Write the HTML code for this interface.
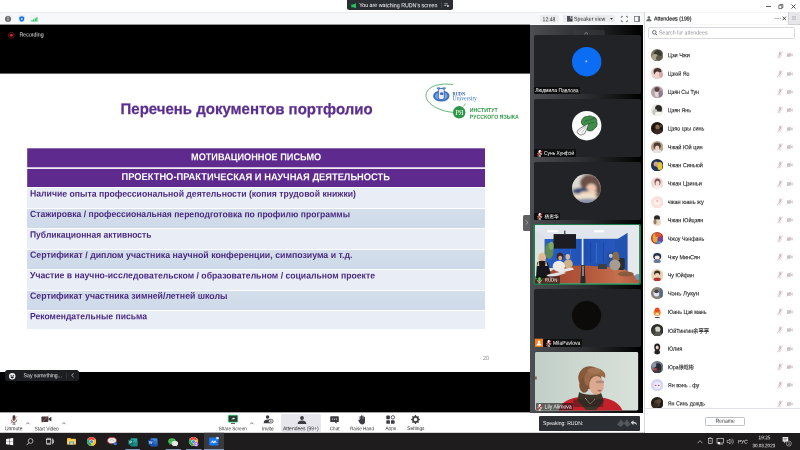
<!DOCTYPE html>
<html lang="ru"><head><meta charset="utf-8"><title>Zoom Webinar</title>
<style>
html,body{margin:0;padding:0;}
body{width:800px;height:450px;overflow:hidden;background:#fff;position:relative;font-family:'Liberation Sans','Noto Sans CJK SC',sans-serif;}
.a{position:absolute;}
.t{position:absolute;white-space:nowrap;transform-origin:0 50%;}
#txt{position:absolute;left:0;top:0;width:800px;height:450px;will-change:transform;}
svg{position:absolute;overflow:visible;}

</style></head><body>
<svg style="left:0px;top:0px" width="800" height="12"><rect x="0.00" y="0.00" width="800.00" height="12.00" fill="#fff"/></svg><div class="a" style="left:0px;top:12px;width:644.00px;height:12.60px;background:#f7f8fa;border-top:0.6px solid #ececf0;box-sizing:border-box;"></div><svg style="left:0px;top:24px" width="530" height="389"><rect x="0.00" y="0.60" width="530.00" height="388.00" fill="#000"/></svg><svg style="left:0px;top:73px" width="530" height="299"><rect x="0.00" y="0.60" width="530.00" height="298.40" fill="#fff"/></svg><svg style="left:0px;top:412px" width="644" height="21"><rect x="0.00" y="0.60" width="644.00" height="20.20" fill="#fff"/></svg><div class="a" style="left:644px;top:12px;width:156.00px;height:420.80px;background:#fff;border-left:0.7px solid #d8d8dc;box-sizing:border-box;"></div><svg style="left:0px;top:432px" width="800" height="18"><rect x="0.00" y="0.80" width="800.00" height="17.20" fill="#1e1c1c"/></svg><div class="a" style="left:347.3px;top:0px;width:105.30px;height:9.80px;background:#2a2d31;border-radius:0 0 2.5px 2.5px;"></div><svg style="left:351px;top:2.6px" width="6" height="6" viewBox="0 0 6 6"><path d="M0.3 1.5h2L5 0.3v5L2.3 4.2h-2z" fill="#23c55e"/></svg><svg style="left:441px;top:2px" width="1" height="6"><rect x="0.40" y="0.00" width="0.50" height="6.00" fill="#55585d"/></svg><svg style="left:444.3px;top:3.2px" width="5" height="5" viewBox="0 0 5 5"><path d="M0.3 0.8h3.6M0.3 2.5h2M3 2.6l0.9 1.4l0.9-1.4z" stroke="#cfd2d6" stroke-width="0.7" fill="#cfd2d6"/></svg><svg style="left:760px;top:0" width="40" height="12" viewBox="760 0 40 12"><path d="M766 6.5h5" stroke="#333" stroke-width="0.8"/><path d="M778.8 5.3h3v3.3h-3z M779.9 5.3v-0.9h3v3.3h-1.1" stroke="#333" stroke-width="0.65" fill="none"/><path d="M791.5 4.5l4 4M795.5 4.5l-4 4" stroke="#222" stroke-width="0.8"/></svg><div class="a" style="left:4.6px;top:15px;width:7.20px;height:7.00px;background:#eeeff2;border-radius:1px;"></div><svg style="left:5.2px;top:15.5px" width="6" height="6" viewBox="0 0 6 6"><circle cx="3" cy="3" r="3" fill="#6b6c70"/><rect x="2.6" y="2.5" width="0.8" height="2.1" fill="#fff"/><circle cx="3" cy="1.5" r="0.5" fill="#fff"/></svg><div class="a" style="left:17.6px;top:15px;width:7.60px;height:7.00px;background:#eeeff2;border-radius:1px;"></div><svg style="left:18.5px;top:16.1px" width="5.5" height="5.9" viewBox="0 0 6.4 7.2"><path d="M3.2 0.2L6.2 1.2V3.6C6.2 5.4 4.8 6.6 3.2 7C1.6 6.6 0.2 5.4 0.2 3.6V1.2z" fill="#0e72ed"/><rect x="2.2" y="2.6" width="2" height="2" rx="0.5" fill="#fff"/></svg><div class="a" style="left:30px;top:15px;width:7.60px;height:7.00px;background:#f1f2f4;border-radius:1px;"></div><svg style="left:30.6px;top:16.6px" width="7" height="4.8" viewBox="0 0 7 5"><rect x="0.3" y="3.2" width="1.2" height="1.6" fill="#23c55e"/><rect x="2" y="2.4" width="1.2" height="2.4" fill="#23c55e"/><rect x="3.7" y="1.3" width="1.2" height="3.5" fill="#23c55e"/><rect x="5.4" y="0.2" width="1.2" height="4.6" fill="#23c55e"/></svg><div class="a" style="left:540px;top:14.6px;width:19.00px;height:7.80px;background:#ebecef;border-radius:1px;"></div><div class="a" style="left:563.3px;top:14.6px;width:52.00px;height:7.80px;background:#ebecef;border-radius:1px;"></div><svg style="left:567.2px;top:15.8px" width="5.6" height="5.6" viewBox="0 0 5.6 5.6"><rect x="0" y="0" width="5.6" height="5.6" fill="#4e5055"/><rect x="3.2" y="0" width="2.4" height="2.5" fill="#ebecef"/><rect x="3.6" y="0.2" width="1.8" height="1.9" fill="#6a6c72"/></svg><svg style="left:609.6px;top:17.6px" width="3" height="2" viewBox="0 0 3 2"><path d="M0 0h3L1.5 1.8z" fill="#333"/></svg><svg style="left:620.9px;top:15.9px" width="6.8" height="6" viewBox="0 0 6.8 6"><path d="M0.4 1.9V0.4H1.9M4.9 0.4H6.4V1.9M6.4 4.1V5.6H4.9M1.9 5.6H0.4V4.1" stroke="#5a5c61" stroke-width="0.75" fill="none"/></svg><svg style="left:634.1px;top:15.9px" width="5.8" height="6" viewBox="0 0 5.8 6"><rect x="0.35" y="0.35" width="5.1" height="5.3" stroke="#63656b" stroke-width="0.7" fill="none"/><rect x="4.3" y="0.35" width="1.3" height="5.3" fill="#63656b"/></svg><svg style="left:8.4px;top:31.5px" width="6.6" height="6.6" viewBox="0 0 6.6 6.6"><circle cx="3.3" cy="3.3" r="2.9" fill="none" stroke="#8d1c1c" stroke-width="0.7"/><circle cx="3.3" cy="3.3" r="1.5" fill="#cf2a2a"/></svg><svg style="left:27px;top:148px" width="458" height="20"><rect x="0.20" y="0.30" width="457.80" height="19.00" fill="#5e2a8e"/></svg><svg style="left:27px;top:168px" width="458" height="20"><rect x="0.20" y="0.90" width="457.80" height="18.50" fill="#5e2a8e"/></svg><div class="a" style="left:27.2px;top:187.4px;width:457.80px;height:20.80px;background:#e9edf6;border-top:0.6px solid #fff;box-sizing:border-box;"></div><div class="a" style="left:27.2px;top:208.2px;width:457.80px;height:20.20px;background:linear-gradient(#d4deeb,#cedaea);border-top:0.6px solid #fff;box-sizing:border-box;"></div><div class="a" style="left:27.2px;top:228.4px;width:457.80px;height:20.20px;background:#e9edf6;border-top:0.6px solid #fff;box-sizing:border-box;"></div><div class="a" style="left:27.2px;top:248.6px;width:457.80px;height:20.20px;background:linear-gradient(#d4deeb,#cedaea);border-top:0.6px solid #fff;box-sizing:border-box;"></div><div class="a" style="left:27.2px;top:268.8px;width:457.80px;height:20.80px;background:#e9edf6;border-top:0.6px solid #fff;box-sizing:border-box;"></div><div class="a" style="left:27.2px;top:289.6px;width:457.80px;height:20.20px;background:linear-gradient(#d4deeb,#cedaea);border-top:0.6px solid #fff;box-sizing:border-box;"></div><div class="a" style="left:27.2px;top:309.8px;width:457.80px;height:19.60px;background:#e9edf6;border-top:0.6px solid #fff;box-sizing:border-box;"></div><svg style="left:420px;top:80px" width="110" height="50" viewBox="420 80 110 50">
<path d="M453 84.6C440 82.5 426 86.5 426 95.5C426 104 440 111.5 453 112.3" fill="none" stroke="#3aa152" stroke-width="0.8"/>
<path d="M463.5 106.5l2-3" stroke="#3aa152" stroke-width="0.7"/>
<circle cx="459.2" cy="112.3" r="6.2" fill="#2e9648"/>
<ellipse cx="441.3" cy="96" rx="8.2" ry="5.6" fill="#3a6fc4"/>
<ellipse cx="441.3" cy="96" rx="6.2" ry="4" fill="#7fa3dc"/>
<rect x="438.3" y="88.5" width="6" height="11" rx="2" fill="#e8eef8" stroke="#2f62b8" stroke-width="0.9"/>
<path d="M436.8 88.2h3.4M442.4 88.2h3.4" stroke="#2f62b8" stroke-width="1.2"/>
<path d="M440.2 92.5h3v2.4h-3z" fill="#2f62b8"/>
</svg><div class="a" style="left:523px;top:214.6px;width:7.50px;height:16.00px;background:#5f6063;border-radius:1.5px 0 0 1.5px;"></div><svg style="left:525.3px;top:220.2px" width="3.4" height="5" viewBox="0 0 3.4 5"><path d="M0.5 0.4L2.9 2.5L0.5 4.6" stroke="#c8c8c8" stroke-width="0.6" fill="none"/></svg><div class="a" style="left:5px;top:369.6px;width:73.50px;height:11.40px;background:#1d1e21;border-radius:2.5px;"></div><svg style="left:8.6px;top:372.6px" width="6.4" height="6.4" viewBox="0 0 6.4 6.4"><circle cx="3.2" cy="3.2" r="3.2" fill="#f2f2f2"/><circle cx="2.1" cy="2.4" r="0.55" fill="#1d1e21"/><circle cx="4.3" cy="2.4" r="0.55" fill="#1d1e21"/><path d="M1.4 3.6h3.6a1.8 1.8 0 0 1-3.6 0z" fill="#1d1e21"/></svg><svg style="left:66px;top:372px" width="1" height="7"><rect x="0.20" y="0.30" width="0.50" height="6.50" fill="#4a4b4f"/></svg><svg style="left:71.2px;top:373.4px" width="3" height="4.6" viewBox="0 0 3 4.6"><path d="M2.6 0.4L0.6 2.3L2.6 4.2" stroke="#e0e0e0" stroke-width="0.7" fill="none"/></svg><div class="a" style="left:530px;top:24.6px;width:113.30px;height:388.40px;background:linear-gradient(90deg,#4d4f54 0%,#46484c 8%,#2c2d30 50%,#0a0a0a 88%,#000 100%);"></div><div class="a" style="left:573px;top:29.6px;width:32.00px;height:5.40px;background:rgba(60,61,64,0.55);border-radius:2px 2px 0 0;"></div><svg style="left:584.2px;top:31.5px" width="4.4" height="2.6" viewBox="0 0 4.4 2.6"><path d="M0.3 2.3L2.2 0.5L4.1 2.3" stroke="#c4c4c4" stroke-width="0.6" fill="none"/></svg><div class="a" style="left:534px;top:35.3px;width:107.00px;height:59.00px;background:#222326;border-radius:2px;"></div><div class="a" style="left:534px;top:98.9px;width:107.00px;height:58.00px;background:#222326;border-radius:2px;"></div><div class="a" style="left:534px;top:161.8px;width:107.00px;height:58.60px;background:#222326;border-radius:2px;"></div><div class="a" style="left:533.1px;top:223.8px;width:107.90px;height:61.30px;background:#1f7d4c;border-radius:2px;"></div><div class="a" style="left:534px;top:289.1px;width:107.00px;height:57.80px;background:#222326;border-radius:2px;"></div><svg style="left:571.7px;top:46.8px" width="29.4" height="29.4"><circle cx="14.7" cy="14.7" r="14.7" fill="#0b6cf4"/></svg><div class="a" style="left:534px;top:86.9px;width:46.20px;height:7.40px;background:rgba(8,8,9,0.82);border-radius:1px;"></div><svg style="left:571.7px;top:110.6px" width="29.4" height="29.4" viewBox="0 0 29.2 29.2"><circle cx="14.6" cy="14.6" r="14.6" fill="#fbfbfb"/>
<path d="M9.6 12.6C8.6 8.6 11.6 5.2 15.4 5.4C17 4.6 19.4 4.8 20.6 5.8C23.4 6 25 8.4 24.6 10.6C25.6 13 24.6 16 22.4 17.4C21 19.6 18 20.4 15.6 19.4C14.8 17.6 14.6 16 15 14.6C13 15 10.8 14.4 9.6 12.6z" fill="#3f8f4a" stroke="#1c3f22" stroke-width="0.7"/>
<path d="M12 11.4C13.6 9.4 16 8.6 18 9M15.4 14.4C17 12 19.6 11 22 11.4M18 9C19.4 7.6 21.4 7.2 23 8" stroke="#1c3f22" stroke-width="0.5" fill="none"/>
<path d="M16.4 12.4C13 14.4 8.4 16.6 6 19C4.6 20.6 5.2 22.6 6.8 22.6C7.4 24 9.4 24.2 10.4 23.2C12 23.4 13 22.4 13 21.4C14.6 18.6 16 15.4 16.4 12.4z" fill="#fdfdfd" stroke="#2a2a2a" stroke-width="0.6"/>
<path d="M7.4 20.6C9.4 18.4 12 16 14.6 14.6M9.4 22C11 20 12.6 18 14.2 16" stroke="#555" stroke-width="0.4" fill="none"/></svg><div class="a" style="left:534px;top:148.9px;width:41.60px;height:8.00px;background:rgba(8,8,9,0.82);border-radius:1px;"></div><svg style="left:536.7px;top:149.7px" width="5.6" height="6.6" viewBox="0 0 5.4 6.4"><rect x="1.5" y="0.1" width="2.4" height="3.9" rx="1.2" fill="#fafafa"/><path d="M0.7 3a2 2 0 0 0 4 0M2.7 5v0.9M1.5 6.1h2.4" stroke="#f4f4f4" stroke-width="0.7" fill="none"/><path d="M0.5 5.7L5 0.7" stroke="#d9342e" stroke-width="1.05"/></svg><svg style="left:571.7px;top:173.7px" width="28.8" height="28.8" viewBox="0 0 29.2 29.2"><defs><clipPath id="c3"><circle cx="14.6" cy="14.6" r="14.6"/></clipPath><filter id="b3"><feGaussianBlur stdDeviation="1"/></filter></defs>
<g clip-path="url(#c3)"><rect width="29.2" height="29.2" fill="#b9b4ac"/><g filter="url(#b3)">
<ellipse cx="6" cy="8" rx="8" ry="8" fill="#dcdad2"/>
<ellipse cx="18" cy="9" rx="10" ry="8" fill="#6a5048"/>
<ellipse cx="26" cy="16" rx="4" ry="7" fill="#5a4840"/>
<ellipse cx="19.6" cy="14.6" rx="5.2" ry="4.6" fill="#f0c8b0"/>
<ellipse cx="9" cy="17" rx="8" ry="3" fill="#3a4876"/>
<ellipse cx="17" cy="19.4" rx="9" ry="2" fill="#f2d4bc"/>
<ellipse cx="13" cy="23" rx="12" ry="2.6" fill="#efe2cc"/>
<ellipse cx="16" cy="27.5" rx="12" ry="2.6" fill="#8a94b0"/>
</g></g></svg><div class="a" style="left:534px;top:212.5px;width:25.90px;height:7.90px;background:rgba(8,8,9,0.82);border-radius:1px;"></div><svg style="left:536.7px;top:213.2px" width="5.6" height="6.6" viewBox="0 0 5.4 6.4"><rect x="1.5" y="0.1" width="2.4" height="3.9" rx="1.2" fill="#fafafa"/><path d="M0.7 3a2 2 0 0 0 4 0M2.7 5v0.9M1.5 6.1h2.4" stroke="#f4f4f4" stroke-width="0.7" fill="none"/><path d="M0.5 5.7L5 0.7" stroke="#d9342e" stroke-width="1.05"/></svg><svg style="left:571.7px;top:300.5px" width="29.2" height="29.2"><circle cx="14.6" cy="14.6" r="14.6" fill="#0d0b0a"/></svg><svg style="left:534px;top:338px" width="10" height="9"><rect x="0.70" y="0.70" width="8.40" height="8.20" fill="#f5821f"/></svg><svg style="left:535.9px;top:339.8px" width="6" height="6" viewBox="0 0 6 6"><circle cx="3" cy="1.8" r="1.3" fill="#fff"/><path d="M0.5 5.4C0.6 3.8 1.8 3.3 3 3.3C4.2 3.3 5.4 3.8 5.5 5.4z" fill="#fff"/></svg><div class="a" style="left:543.1px;top:338.7px;width:38.70px;height:8.20px;background:rgba(8,8,9,0.82);border-radius:1px;"></div><svg style="left:545.6px;top:339.6px" width="5.6" height="6.6" viewBox="0 0 5.4 6.4"><rect x="1.5" y="0.1" width="2.4" height="3.9" rx="1.2" fill="#fafafa"/><path d="M0.7 3a2 2 0 0 0 4 0M2.7 5v0.9M1.5 6.1h2.4" stroke="#f4f4f4" stroke-width="0.7" fill="none"/><path d="M0.5 5.7L5 0.7" stroke="#d9342e" stroke-width="1.05"/></svg><svg style="left:534.8px;top:225.4px" width="104.1" height="58.2" viewBox="534.6 225.4 104.8 57.7" preserveAspectRatio="none">
<defs><clipPath id="c4"><rect x="534.6" y="225.4" width="104.8" height="57.7" rx="1"/></clipPath><filter id="b4" x="-5%" y="-5%" width="110%" height="110%"><feGaussianBlur stdDeviation="0.65"/></filter>
<linearGradient id="tab" x1="0" x2="1"><stop offset="0" stop-color="#9c4630"/><stop offset="0.5" stop-color="#b4563a"/><stop offset="0.8" stop-color="#c4704e"/><stop offset="1" stop-color="#b05a40"/></linearGradient><linearGradient id="cur" x1="0" x2="1"><stop offset="0" stop-color="#2a5fc4"/><stop offset="0.5" stop-color="#1f50b4"/><stop offset="1" stop-color="#2a5cc0"/></linearGradient></defs>
<g clip-path="url(#c4)"><rect x="534" y="225" width="106" height="59" fill="#dde3ea"/><g filter="url(#b4)">
<polygon points="534,225 640,225 640,229 627,238 545,237 534,231" fill="#e0e6ec"/>
<rect x="547" y="230.6" width="11" height="2" fill="#fff"/><rect x="594" y="230.6" width="10" height="2" fill="#fff"/>
<polygon points="544,239.4 627,239 627,268 544,268" fill="url(#cur)"/>
<polygon points="615,241 628,233 628,272 615,268" fill="#2452b0"/>
<rect x="581.6" y="238" width="1.8" height="28" fill="#dfe6ee"/>
<rect x="596" y="243" width="1" height="20" fill="#4a78d0" opacity="0.7"/><rect x="603" y="243" width="1" height="20" fill="#183f98" opacity="0.7"/><rect x="590" y="243" width="1" height="20" fill="#183f98" opacity="0.6"/><rect x="570" y="248" width="1" height="16" fill="#4a78d0" opacity="0.6"/>
<polygon points="534,231 544,236 544,270 534,272" fill="#dde2e6"/>
<polygon points="628,232 640,227 640,276 628,272" fill="#e6e9ec"/>
<rect x="553.3" y="234.4" width="22.6" height="14.4" fill="#1b1c20"/><rect x="564" y="231" width="1.2" height="4" fill="#333"/>
<ellipse cx="549" cy="251" rx="4.2" ry="8" fill="#5f8a52"/><ellipse cx="551" cy="246" rx="2.4" ry="4" fill="#7fa868"/>
<rect x="607" y="252" width="7" height="12" fill="#2a4d9a"/><circle cx="611" cy="256" r="2" fill="#b8c4e0"/>
<polygon points="534,283.5 640,283.5 640,279 623,268 584,265.5 560,266 541,276 534,280" fill="url(#tab)"/>


<polygon points="581.2,265 584.6,265 585.6,284 580.2,284" fill="#2b2c2e"/>
<rect x="582" y="266" width="1.8" height="10" fill="#8b8f92"/>
<rect x="598" y="264" width="9" height="5" fill="#3a3f4a"/>
<rect x="618" y="258" width="7" height="12" rx="2" fill="#2a2d33"/>
<ellipse cx="626" cy="274" rx="8" ry="2.4" fill="#8a5a3c"/>
<ellipse cx="639" cy="277" rx="4" ry="3" fill="#7f8fa8"/>
<g transform="translate(0,1)"><!-- woman right -->
<ellipse cx="615.6" cy="254.6" rx="2.6" ry="3.2" fill="#c89a7c"/><path d="M613 254c0-4 6-4 6 0l0.8 5h-7.4z" fill="#8a6a48"/>
<ellipse cx="615" cy="264" rx="5.6" ry="5.4" fill="#a89c90"/>
<!-- man 3 -->
<ellipse cx="567.6" cy="256" rx="2.3" ry="2.8" fill="#d8b89c"/><ellipse cx="568" cy="263" rx="4.6" ry="4.4" fill="#cbb088"/>
<!-- woman 2 -->
<ellipse cx="559.8" cy="255.6" rx="3.4" ry="3.6" fill="#3a2620"/><ellipse cx="560" cy="257.2" rx="2" ry="2.4" fill="#d6a88c"/>
<ellipse cx="558.6" cy="265.2" rx="6.2" ry="5.4" fill="#eeeae6"/>
<polygon points="556,269 572,266.5 574,268.5 560,272" fill="#e8e8ea"/>
<!-- woman 1 -->
<ellipse cx="541.8" cy="256.6" rx="4" ry="4.6" fill="#dcc088"/><ellipse cx="542.2" cy="257.4" rx="2.2" ry="2.8" fill="#e0b498"/>
<path d="M536.6 262c1-3 9-3 11 0l2.6 10l-5 5h-9.6z" fill="#17171a"/><path d="M538.2 259l-1.6 6h2.4zM545.4 259l1.8 6h-2.4z" fill="#dcc088"/>
<polygon points="546,274 562,270.5 566,272 550,277" fill="#dfe2e6"/>
</g></g></g></svg><div class="a" style="left:535px;top:276.2px;width:24.80px;height:7.40px;background:rgba(20,20,20,0.55);border-radius:1px;"></div><svg style="left:536.9px;top:276.5px" width="5" height="6.4" viewBox="0 0 5 6.4"><rect x="1.3" y="0.2" width="2.4" height="4" rx="1.1" fill="#3fe04f"/><path d="M0.5 3a2 2 0 0 0 4 0M2.5 5v1M1.4 6.1h2.2" stroke="#e8f8ea" stroke-width="0.6" fill="none"/></svg><svg style="left:534.9px;top:351.8px" width="103.2" height="58.4" viewBox="534.4 351.4 104 58.6" preserveAspectRatio="none">
<defs><clipPath id="c6"><rect x="534.4" y="351.4" width="104" height="58.6" rx="1.5"/></clipPath><filter id="b6" x="-5%" y="-5%" width="110%" height="110%"><feGaussianBlur stdDeviation="0.7"/></filter>
<linearGradient id="wall" x1="0" x2="1"><stop offset="0" stop-color="#c1cec7"/><stop offset="0.4" stop-color="#cbd7cf"/><stop offset="1" stop-color="#d8e1da"/></linearGradient></defs>
<g clip-path="url(#c6)"><rect x="534" y="351" width="105" height="60" fill="url(#wall)"/><g filter="url(#b6)">
<path d="M558 411c2-9 10-13.5 22-14.5l20 0.5c12 1 20 6 23 14z" fill="#c3202c"/>
<g transform="translate(0,-1.4)"><path d="M579 393c4 3 14 4 22 1l3 8l-8 9h-10l-9-10z" fill="#3d342a"/>
<path d="M585 399l5 6l5-5" stroke="#b8a890" stroke-width="1" fill="none"/>
<ellipse cx="589.6" cy="378.6" rx="11.6" ry="11.4" fill="#875a3e"/>
<ellipse cx="584" cy="386" rx="5" ry="7.6" fill="#7d5238"/>
<ellipse cx="596.4" cy="386.4" rx="7.4" ry="9.4" fill="#dba98f"/>
<path d="M584 380c1-9 10-13 18-9c3 2 4 5 3 8c-5-4-11-4-15-1c-1 3-1 6-2 9c-3-1-4-4-4-7z" fill="#9a6a4a"/>
<ellipse cx="594" cy="371.4" rx="7" ry="3" fill="#a87856" opacity="0.8"/>
<ellipse cx="599.8" cy="382.8" rx="4.4" ry="1.3" fill="#a58374" opacity="0.8"/>
<ellipse cx="599.4" cy="391.6" rx="2" ry="0.8" fill="#b0625a"/>
</g>
<rect x="534.4" y="376" width="1.8" height="3" fill="#7a4a3a" opacity="0.8"/>
</g>
<rect x="573" y="399" width="30" height="7.6" fill="#241a18" opacity="0.45"/>
</g></svg><div class="a" style="left:535.8px;top:403.4px;width:37.20px;height:6.60px;background:rgba(20,20,20,0.6);border-radius:1px;"></div><svg style="left:537.2px;top:403.6px" width="5.6" height="6.6" viewBox="0 0 5.4 6.4"><rect x="1.5" y="0.1" width="2.4" height="3.9" rx="1.2" fill="#fafafa"/><path d="M0.7 3a2 2 0 0 0 4 0M2.7 5v0.9M1.5 6.1h2.4" stroke="#f4f4f4" stroke-width="0.7" fill="none"/><path d="M0.5 5.7L5 0.7" stroke="#d9342e" stroke-width="1.05"/></svg><div class="a" style="left:538.8px;top:416px;width:101.20px;height:14.60px;background:#2b2e33;border-radius:1px;"></div><svg style="left:616px;top:418.4px" width="22" height="10" viewBox="0 0 22 10"><path d="M1 6.5L5 1.5L8 5L11 1.2L14.5 6.5L11 9L8 5.6L5 9z" fill="#54585e"/><path d="M17.4 2.2v1.6c2 0 3.6 1 3.8 3.8c-0.8-1.4-2-2-3.8-2v1.6L14.6 4.6z" fill="#c9ccd0"/></svg><svg style="left:645.9px;top:15.5px" width="5.8" height="5.4" viewBox="0 0 5.8 5.4"><circle cx="2.9" cy="1.5" r="1.35" fill="#66686e"/><path d="M0.2 5.2C0.3 3.7 1.4 3.1 2.9 3.1C4.4 3.1 5.5 3.7 5.6 5.2z" fill="#66686e"/></svg><svg style="left:775px;top:16px" width="12" height="5" viewBox="775 16 12 5"><path d="M775.2 18.4h1.3M777.4 18.4h1.3M779.6 18.4h1.3" stroke="#444" stroke-width="0.6"/><path d="M782.6 16.6l3.4 3.6M786 16.6l-3.4 3.6" stroke="#222" stroke-width="0.8"/></svg><div class="a" style="left:788.4px;top:12.4px;width:11.60px;height:12.20px;background:#e7e7eb;border-left:0.5px solid #d0d0d6;border-bottom:0.5px solid #d0d0d6;box-sizing:border-box;"></div><svg style="left:792px;top:16.4px" width="4" height="4" viewBox="0 0 4 4"><path d="M0 0.6h4M0 2h4M0 3.4h4" stroke="#b4b4ba" stroke-width="0.7"/></svg><svg style="left:644px;top:24px" width="145" height="1"><rect x="0.70" y="0.20" width="143.70" height="0.50" fill="#ececf0"/></svg><svg style="left:644px;top:12px" width="145" height="1"><rect x="0.70" y="0.00" width="143.70" height="0.50" fill="#ececf0"/></svg><div class="a" style="left:648.4px;top:26.5px;width:146.40px;height:12.30px;background:#fff;border:0.7px solid #d6d8e0;border-radius:1.5px;box-sizing:border-box;"></div><svg style="left:652px;top:30.2px" width="5.4" height="5.6" viewBox="0 0 5.4 5.6"><circle cx="2.3" cy="2.3" r="1.8" stroke="#3a3f5a" stroke-width="0.75" fill="none"/><path d="M3.6 3.7L5 5.2" stroke="#3a3f5a" stroke-width="0.85"/></svg><svg width="0" height="0" style="left:0;top:0"><defs><filter id="ba" x="-10%" y="-10%" width="120%" height="120%"><feGaussianBlur stdDeviation="0.5"/></filter><clipPath id="ca"><circle cx="6.2" cy="6.2" r="6.2"/></clipPath></defs></svg><svg style="left:650.8px;top:49.10px;overflow:hidden" width="12.4" height="12.40" viewBox="0 0 12.4 12.40"><g clip-path="url(#ca)"><rect width="12.4" height="12.4" fill="#7d7a62"/><g filter="url(#ba)"><ellipse cx="7" cy="5" rx="4" ry="4" fill="#3b3a30"/><ellipse cx="4" cy="8" rx="3" ry="3" fill="#a9a58c"/><ellipse cx="8" cy="9" rx="3" ry="2.5" fill="#5b5a48"/></g></g></svg><svg style="left:776px;top:51.40px" width="18" height="8" viewBox="776 0 18 8"><rect x="779.1" y="0.6" width="1.8" height="3.5" rx="0.9" fill="#c6c6cc"/><path d="M778.2 3.4a1.8 1.8 0 0 0 3.6 0M780 5.2v1.3M779 6.7h2" stroke="#c6c6cc" stroke-width="0.5" fill="none"/><path d="M777.4 7.2L782.6 0.6" stroke="#f28a8a" stroke-width="0.6"/><rect x="787" y="2.3" width="3.8" height="3.4" rx="0.5" fill="#c8c8ce"/><path d="M791 3.6L792.7 2.5V5.5L791 4.4z" fill="#c8c8ce"/><path d="M786.6 6.4L791.4 1.6" stroke="#f4a0a0" stroke-width="0.6"/></svg><svg style="left:650.8px;top:67.43px;overflow:hidden" width="12.4" height="12.40" viewBox="0 0 12.4 12.40"><g clip-path="url(#ca)"><rect width="12.4" height="12.4" fill="#e9d5cf"/><g filter="url(#ba)"><ellipse cx="6.5" cy="4.5" rx="4" ry="3.6" fill="#4a3430"/><ellipse cx="6.5" cy="7.5" rx="2.6" ry="3" fill="#f0d2c6"/><ellipse cx="10" cy="8" rx="2" ry="3" fill="#d6a9a4"/></g></g></svg><svg style="left:776px;top:69.73px" width="18" height="8" viewBox="776 0 18 8"><rect x="779.1" y="0.6" width="1.8" height="3.5" rx="0.9" fill="#c6c6cc"/><path d="M778.2 3.4a1.8 1.8 0 0 0 3.6 0M780 5.2v1.3M779 6.7h2" stroke="#c6c6cc" stroke-width="0.5" fill="none"/><path d="M777.4 7.2L782.6 0.6" stroke="#f28a8a" stroke-width="0.6"/><rect x="787" y="2.3" width="3.8" height="3.4" rx="0.5" fill="#c8c8ce"/><path d="M791 3.6L792.7 2.5V5.5L791 4.4z" fill="#c8c8ce"/><path d="M786.6 6.4L791.4 1.6" stroke="#f4a0a0" stroke-width="0.6"/></svg><svg style="left:650.8px;top:85.77px;overflow:hidden" width="12.4" height="12.40" viewBox="0 0 12.4 12.40"><g clip-path="url(#ca)"><rect width="12.4" height="12.4" fill="#b7a3aa"/><g filter="url(#ba)"><ellipse cx="6" cy="6" rx="2.4" ry="5" fill="#e8d6d2"/><ellipse cx="6" cy="3.5" rx="2.6" ry="2.4" fill="#5a4644"/><ellipse cx="9.5" cy="8" rx="2" ry="3.5" fill="#8a7a90"/></g></g></svg><svg style="left:776px;top:88.07px" width="18" height="8" viewBox="776 0 18 8"><rect x="779.1" y="0.6" width="1.8" height="3.5" rx="0.9" fill="#c6c6cc"/><path d="M778.2 3.4a1.8 1.8 0 0 0 3.6 0M780 5.2v1.3M779 6.7h2" stroke="#c6c6cc" stroke-width="0.5" fill="none"/><path d="M777.4 7.2L782.6 0.6" stroke="#f28a8a" stroke-width="0.6"/><rect x="787" y="2.3" width="3.8" height="3.4" rx="0.5" fill="#c8c8ce"/><path d="M791 3.6L792.7 2.5V5.5L791 4.4z" fill="#c8c8ce"/><path d="M786.6 6.4L791.4 1.6" stroke="#f4a0a0" stroke-width="0.6"/></svg><svg style="left:650.8px;top:104.10px;overflow:hidden" width="12.4" height="12.40" viewBox="0 0 12.4 12.40"><g clip-path="url(#ca)"><rect width="12.4" height="12.4" fill="#e6e6e2"/><g filter="url(#ba)"><ellipse cx="7.5" cy="5" rx="3.5" ry="4" fill="#2e2c2a"/><ellipse cx="4" cy="8" rx="2.5" ry="3" fill="#c9c4b8"/><ellipse cx="8" cy="10" rx="4" ry="2.4" fill="#f4f4f0"/></g></g></svg><svg style="left:776px;top:106.40px" width="18" height="8" viewBox="776 0 18 8"><rect x="779.1" y="0.6" width="1.8" height="3.5" rx="0.9" fill="#c6c6cc"/><path d="M778.2 3.4a1.8 1.8 0 0 0 3.6 0M780 5.2v1.3M779 6.7h2" stroke="#c6c6cc" stroke-width="0.5" fill="none"/><path d="M777.4 7.2L782.6 0.6" stroke="#f28a8a" stroke-width="0.6"/><rect x="787" y="2.3" width="3.8" height="3.4" rx="0.5" fill="#c8c8ce"/><path d="M791 3.6L792.7 2.5V5.5L791 4.4z" fill="#c8c8ce"/><path d="M786.6 6.4L791.4 1.6" stroke="#f4a0a0" stroke-width="0.6"/></svg><svg style="left:650.8px;top:122.43px;overflow:hidden" width="12.4" height="12.40" viewBox="0 0 12.4 12.40"><g clip-path="url(#ca)"><rect width="12.4" height="12.4" fill="#1e1712"/><g filter="url(#ba)"><ellipse cx="6.5" cy="5" rx="2.2" ry="2.6" fill="#8a6a50"/><ellipse cx="7" cy="10" rx="4" ry="3" fill="#3a2a20"/><ellipse cx="10" cy="4" rx="1.5" ry="1.5" fill="#4a3a2a"/></g></g></svg><svg style="left:776px;top:124.73px" width="18" height="8" viewBox="776 0 18 8"><rect x="779.1" y="0.6" width="1.8" height="3.5" rx="0.9" fill="#c6c6cc"/><path d="M778.2 3.4a1.8 1.8 0 0 0 3.6 0M780 5.2v1.3M779 6.7h2" stroke="#c6c6cc" stroke-width="0.5" fill="none"/><path d="M777.4 7.2L782.6 0.6" stroke="#f28a8a" stroke-width="0.6"/><rect x="787" y="2.3" width="3.8" height="3.4" rx="0.5" fill="#c8c8ce"/><path d="M791 3.6L792.7 2.5V5.5L791 4.4z" fill="#c8c8ce"/><path d="M786.6 6.4L791.4 1.6" stroke="#f4a0a0" stroke-width="0.6"/></svg><svg style="left:650.8px;top:140.76px;overflow:hidden" width="12.4" height="12.40" viewBox="0 0 12.4 12.40"><g clip-path="url(#ca)"><rect width="12.4" height="12.4" fill="#b9a58f"/><g filter="url(#ba)"><ellipse cx="6.2" cy="5" rx="3.6" ry="3.4" fill="#4a3a32"/><ellipse cx="6.2" cy="7" rx="2.2" ry="2.6" fill="#ead2c0"/><ellipse cx="6.2" cy="11" rx="4.5" ry="2.5" fill="#e8e2da"/></g></g></svg><svg style="left:776px;top:143.06px" width="18" height="8" viewBox="776 0 18 8"><rect x="779.1" y="0.6" width="1.8" height="3.5" rx="0.9" fill="#c6c6cc"/><path d="M778.2 3.4a1.8 1.8 0 0 0 3.6 0M780 5.2v1.3M779 6.7h2" stroke="#c6c6cc" stroke-width="0.5" fill="none"/><path d="M777.4 7.2L782.6 0.6" stroke="#f28a8a" stroke-width="0.6"/><rect x="787" y="2.3" width="3.8" height="3.4" rx="0.5" fill="#c8c8ce"/><path d="M791 3.6L792.7 2.5V5.5L791 4.4z" fill="#c8c8ce"/><path d="M786.6 6.4L791.4 1.6" stroke="#f4a0a0" stroke-width="0.6"/></svg><svg style="left:650.8px;top:159.10px;overflow:hidden" width="12.4" height="12.40" viewBox="0 0 12.4 12.40"><g clip-path="url(#ca)"><rect width="12.4" height="12.4" fill="#1f2f50"/><g filter="url(#ba)"><ellipse cx="8.5" cy="7" rx="3" ry="4" fill="#e5c62e"/><ellipse cx="5" cy="5" rx="2.4" ry="2.6" fill="#c9a68a"/><ellipse cx="4" cy="10" rx="3" ry="2.5" fill="#26365e"/></g></g></svg><svg style="left:776px;top:161.40px" width="18" height="8" viewBox="776 0 18 8"><rect x="779.1" y="0.6" width="1.8" height="3.5" rx="0.9" fill="#c6c6cc"/><path d="M778.2 3.4a1.8 1.8 0 0 0 3.6 0M780 5.2v1.3M779 6.7h2" stroke="#c6c6cc" stroke-width="0.5" fill="none"/><path d="M777.4 7.2L782.6 0.6" stroke="#f28a8a" stroke-width="0.6"/><rect x="787" y="2.3" width="3.8" height="3.4" rx="0.5" fill="#c8c8ce"/><path d="M791 3.6L792.7 2.5V5.5L791 4.4z" fill="#c8c8ce"/><path d="M786.6 6.4L791.4 1.6" stroke="#f4a0a0" stroke-width="0.6"/></svg><svg style="left:650.8px;top:177.43px;overflow:hidden" width="12.4" height="12.40" viewBox="0 0 12.4 12.40"><g clip-path="url(#ca)"><rect width="12.4" height="12.4" fill="#f3d9d6"/><g filter="url(#ba)"><ellipse cx="6.5" cy="5" rx="3" ry="3.6" fill="#7a5a56"/><ellipse cx="6.5" cy="6.4" rx="2" ry="2.6" fill="#f6dcd2"/><ellipse cx="6.5" cy="11" rx="4" ry="2.5" fill="#f8ecea"/></g></g></svg><svg style="left:776px;top:179.73px" width="18" height="8" viewBox="776 0 18 8"><rect x="779.1" y="0.6" width="1.8" height="3.5" rx="0.9" fill="#c6c6cc"/><path d="M778.2 3.4a1.8 1.8 0 0 0 3.6 0M780 5.2v1.3M779 6.7h2" stroke="#c6c6cc" stroke-width="0.5" fill="none"/><path d="M777.4 7.2L782.6 0.6" stroke="#f28a8a" stroke-width="0.6"/><rect x="787" y="2.3" width="3.8" height="3.4" rx="0.5" fill="#c8c8ce"/><path d="M791 3.6L792.7 2.5V5.5L791 4.4z" fill="#c8c8ce"/><path d="M786.6 6.4L791.4 1.6" stroke="#f4a0a0" stroke-width="0.6"/></svg><svg style="left:650.8px;top:195.76px;overflow:hidden" width="12.4" height="12.40" viewBox="0 0 12.4 12.40"><g clip-path="url(#ca)"><rect width="12.4" height="12.4" fill="#fbe0dc"/><g filter="url(#ba)"><ellipse cx="6.2" cy="6.2" rx="3.4" ry="3" fill="#fdf0ee"/><ellipse cx="6.2" cy="5" rx="1.2" ry="1" fill="#f0b8b0"/></g></g></svg><svg style="left:776px;top:198.06px" width="18" height="8" viewBox="776 0 18 8"><rect x="779.1" y="0.6" width="1.8" height="3.5" rx="0.9" fill="#c6c6cc"/><path d="M778.2 3.4a1.8 1.8 0 0 0 3.6 0M780 5.2v1.3M779 6.7h2" stroke="#c6c6cc" stroke-width="0.5" fill="none"/><path d="M777.4 7.2L782.6 0.6" stroke="#f28a8a" stroke-width="0.6"/><rect x="787" y="2.3" width="3.8" height="3.4" rx="0.5" fill="#c8c8ce"/><path d="M791 3.6L792.7 2.5V5.5L791 4.4z" fill="#c8c8ce"/><path d="M786.6 6.4L791.4 1.6" stroke="#f4a0a0" stroke-width="0.6"/></svg><svg style="left:650.8px;top:214.10px;overflow:hidden" width="12.4" height="12.40" viewBox="0 0 12.4 12.40"><g clip-path="url(#ca)"><rect width="12.4" height="12.4" fill="#fafafa"/><g filter="url(#ba)"><ellipse cx="6" cy="4" rx="3" ry="2.8" fill="#2c2a28"/><ellipse cx="6.4" cy="8.5" rx="3.4" ry="3.2" fill="#e8d8c0"/><ellipse cx="4" cy="8" rx="1.6" ry="2.4" fill="#a0785a"/></g></g></svg><svg style="left:776px;top:216.40px" width="18" height="8" viewBox="776 0 18 8"><rect x="779.1" y="0.6" width="1.8" height="3.5" rx="0.9" fill="#c6c6cc"/><path d="M778.2 3.4a1.8 1.8 0 0 0 3.6 0M780 5.2v1.3M779 6.7h2" stroke="#c6c6cc" stroke-width="0.5" fill="none"/><path d="M777.4 7.2L782.6 0.6" stroke="#f28a8a" stroke-width="0.6"/><rect x="787" y="2.3" width="3.8" height="3.4" rx="0.5" fill="#c8c8ce"/><path d="M791 3.6L792.7 2.5V5.5L791 4.4z" fill="#c8c8ce"/><path d="M786.6 6.4L791.4 1.6" stroke="#f4a0a0" stroke-width="0.6"/></svg><svg style="left:650.8px;top:232.43px;overflow:hidden" width="12.4" height="12.40" viewBox="0 0 12.4 12.40"><g clip-path="url(#ca)"><rect width="12.4" height="12.4" fill="#c0392b"/><g filter="url(#ba)"><ellipse cx="4.5" cy="6" rx="3" ry="4.5" fill="#e8a53a"/><ellipse cx="9" cy="8" rx="2.6" ry="3.4" fill="#7a3fa0"/><ellipse cx="7" cy="3" rx="3" ry="2" fill="#d85a3a"/><ellipse cx="8" cy="10.5" rx="2.6" ry="1.6" fill="#3a9ad0"/></g></g></svg><svg style="left:776px;top:234.73px" width="18" height="8" viewBox="776 0 18 8"><rect x="779.1" y="0.6" width="1.8" height="3.5" rx="0.9" fill="#c6c6cc"/><path d="M778.2 3.4a1.8 1.8 0 0 0 3.6 0M780 5.2v1.3M779 6.7h2" stroke="#c6c6cc" stroke-width="0.5" fill="none"/><path d="M777.4 7.2L782.6 0.6" stroke="#f28a8a" stroke-width="0.6"/><rect x="787" y="2.3" width="3.8" height="3.4" rx="0.5" fill="#c8c8ce"/><path d="M791 3.6L792.7 2.5V5.5L791 4.4z" fill="#c8c8ce"/><path d="M786.6 6.4L791.4 1.6" stroke="#f4a0a0" stroke-width="0.6"/></svg><svg style="left:650.8px;top:250.76px;overflow:hidden" width="12.4" height="12.40" viewBox="0 0 12.4 12.40"><g clip-path="url(#ca)"><rect width="12.4" height="12.4" fill="#f4f6f8"/><g filter="url(#ba)"><ellipse cx="6.2" cy="5.4" rx="4" ry="3.4" fill="#25324a"/><ellipse cx="6.2" cy="6.4" rx="2.6" ry="2" fill="#f6e8e0"/><ellipse cx="6.2" cy="10.6" rx="3.6" ry="2" fill="#6a7a9a"/></g></g></svg><svg style="left:776px;top:253.06px" width="18" height="8" viewBox="776 0 18 8"><rect x="779.1" y="0.6" width="1.8" height="3.5" rx="0.9" fill="#c6c6cc"/><path d="M778.2 3.4a1.8 1.8 0 0 0 3.6 0M780 5.2v1.3M779 6.7h2" stroke="#c6c6cc" stroke-width="0.5" fill="none"/><path d="M777.4 7.2L782.6 0.6" stroke="#f28a8a" stroke-width="0.6"/><rect x="787" y="2.3" width="3.8" height="3.4" rx="0.5" fill="#c8c8ce"/><path d="M791 3.6L792.7 2.5V5.5L791 4.4z" fill="#c8c8ce"/><path d="M786.6 6.4L791.4 1.6" stroke="#f4a0a0" stroke-width="0.6"/></svg><svg style="left:650.8px;top:269.10px;overflow:hidden" width="12.4" height="12.40" viewBox="0 0 12.4 12.40"><g clip-path="url(#ca)"><rect width="12.4" height="12.4" fill="#e6d3b0"/><g filter="url(#ba)"><ellipse cx="6.2" cy="4.2" rx="3" ry="2.6" fill="#3a2a22"/><ellipse cx="6.2" cy="6.4" rx="2.4" ry="2.4" fill="#f0d4bc"/><ellipse cx="6.2" cy="10.8" rx="3.6" ry="2.4" fill="#b8322a"/></g></g></svg><svg style="left:776px;top:271.40px" width="18" height="8" viewBox="776 0 18 8"><rect x="779.1" y="0.6" width="1.8" height="3.5" rx="0.9" fill="#c6c6cc"/><path d="M778.2 3.4a1.8 1.8 0 0 0 3.6 0M780 5.2v1.3M779 6.7h2" stroke="#c6c6cc" stroke-width="0.5" fill="none"/><path d="M777.4 7.2L782.6 0.6" stroke="#f28a8a" stroke-width="0.6"/><rect x="787" y="2.3" width="3.8" height="3.4" rx="0.5" fill="#c8c8ce"/><path d="M791 3.6L792.7 2.5V5.5L791 4.4z" fill="#c8c8ce"/><path d="M786.6 6.4L791.4 1.6" stroke="#f4a0a0" stroke-width="0.6"/></svg><svg style="left:650.8px;top:287.43px;overflow:hidden" width="12.4" height="12.40" viewBox="0 0 12.4 12.40"><g clip-path="url(#ca)"><rect width="12.4" height="12.4" fill="#8a8478"/><g filter="url(#ba)"><ellipse cx="5.5" cy="6" rx="3" ry="3.4" fill="#dfe6ee"/><ellipse cx="5.5" cy="4.2" rx="2.4" ry="2" fill="#4a4440"/><ellipse cx="10" cy="6" rx="1.8" ry="5" fill="#5a6a8a"/></g></g></svg><svg style="left:776px;top:289.73px" width="18" height="8" viewBox="776 0 18 8"><rect x="779.1" y="0.6" width="1.8" height="3.5" rx="0.9" fill="#c6c6cc"/><path d="M778.2 3.4a1.8 1.8 0 0 0 3.6 0M780 5.2v1.3M779 6.7h2" stroke="#c6c6cc" stroke-width="0.5" fill="none"/><path d="M777.4 7.2L782.6 0.6" stroke="#f28a8a" stroke-width="0.6"/><rect x="787" y="2.3" width="3.8" height="3.4" rx="0.5" fill="#c8c8ce"/><path d="M791 3.6L792.7 2.5V5.5L791 4.4z" fill="#c8c8ce"/><path d="M786.6 6.4L791.4 1.6" stroke="#f4a0a0" stroke-width="0.6"/></svg><svg style="left:650.8px;top:305.76px;overflow:hidden" width="12.4" height="12.40" viewBox="0 0 12.4 12.40"><g clip-path="url(#ca)"><rect width="12.4" height="12.4" fill="#fff"/><g filter="url(#ba)"><ellipse cx="6.2" cy="6.6" rx="3.6" ry="3.6" fill="#f0882a"/><ellipse cx="6.2" cy="4" rx="2.4" ry="2.6" fill="#e8501e"/><ellipse cx="6.2" cy="8" rx="1.8" ry="1.6" fill="#fbe0b0"/><ellipse cx="6.2" cy="11.6" rx="3" ry="0.6" fill="#333"/></g></g></svg><svg style="left:776px;top:308.06px" width="18" height="8" viewBox="776 0 18 8"><rect x="779.1" y="0.6" width="1.8" height="3.5" rx="0.9" fill="#c6c6cc"/><path d="M778.2 3.4a1.8 1.8 0 0 0 3.6 0M780 5.2v1.3M779 6.7h2" stroke="#c6c6cc" stroke-width="0.5" fill="none"/><path d="M777.4 7.2L782.6 0.6" stroke="#f28a8a" stroke-width="0.6"/><rect x="787" y="2.3" width="3.8" height="3.4" rx="0.5" fill="#c8c8ce"/><path d="M791 3.6L792.7 2.5V5.5L791 4.4z" fill="#c8c8ce"/><path d="M786.6 6.4L791.4 1.6" stroke="#f4a0a0" stroke-width="0.6"/></svg><svg style="left:650.8px;top:324.10px;overflow:hidden" width="12.4" height="12.40" viewBox="0 0 12.4 12.40"><g clip-path="url(#ca)"><rect width="12.4" height="12.4" fill="#2c2e2a"/><g filter="url(#ba)"><ellipse cx="6.6" cy="5.4" rx="2.8" ry="3" fill="#d4d4c8"/><ellipse cx="6.4" cy="10.6" rx="4.4" ry="3" fill="#55574f"/><ellipse cx="3" cy="7" rx="1.6" ry="3" fill="#3f413a"/></g></g></svg><svg style="left:776px;top:326.40px" width="18" height="8" viewBox="776 0 18 8"><rect x="779.1" y="0.6" width="1.8" height="3.5" rx="0.9" fill="#c6c6cc"/><path d="M778.2 3.4a1.8 1.8 0 0 0 3.6 0M780 5.2v1.3M779 6.7h2" stroke="#c6c6cc" stroke-width="0.5" fill="none"/><path d="M777.4 7.2L782.6 0.6" stroke="#f28a8a" stroke-width="0.6"/><rect x="787" y="2.3" width="3.8" height="3.4" rx="0.5" fill="#c8c8ce"/><path d="M791 3.6L792.7 2.5V5.5L791 4.4z" fill="#c8c8ce"/><path d="M786.6 6.4L791.4 1.6" stroke="#f4a0a0" stroke-width="0.6"/></svg><svg style="left:650.8px;top:342.43px;overflow:hidden" width="12.4" height="12.40" viewBox="0 0 12.4 12.40"><g clip-path="url(#ca)"><rect width="12.4" height="12.4" fill="#fafafa"/><g filter="url(#ba)"><ellipse cx="6.2" cy="5" rx="3" ry="3.6" fill="#1e1a1a"/><ellipse cx="6.2" cy="5.6" rx="1.5" ry="2" fill="#e8cfc4"/><ellipse cx="6.2" cy="10.4" rx="2.8" ry="3" fill="#2a2224"/></g></g></svg><svg style="left:776px;top:344.73px" width="18" height="8" viewBox="776 0 18 8"><rect x="779.1" y="0.6" width="1.8" height="3.5" rx="0.9" fill="#c6c6cc"/><path d="M778.2 3.4a1.8 1.8 0 0 0 3.6 0M780 5.2v1.3M779 6.7h2" stroke="#c6c6cc" stroke-width="0.5" fill="none"/><path d="M777.4 7.2L782.6 0.6" stroke="#f28a8a" stroke-width="0.6"/><rect x="787" y="2.3" width="3.8" height="3.4" rx="0.5" fill="#c8c8ce"/><path d="M791 3.6L792.7 2.5V5.5L791 4.4z" fill="#c8c8ce"/><path d="M786.6 6.4L791.4 1.6" stroke="#f4a0a0" stroke-width="0.6"/></svg><svg style="left:650.8px;top:360.76px;overflow:hidden" width="12.4" height="12.40" viewBox="0 0 12.4 12.40"><g clip-path="url(#ca)"><rect width="12.4" height="12.4" fill="#6d7582"/><g filter="url(#ba)"><ellipse cx="7" cy="6.6" rx="3.4" ry="4.4" fill="#2a2c33"/><ellipse cx="6.2" cy="11" rx="4.6" ry="2.4" fill="#3a3d45"/><ellipse cx="4.6" cy="8.4" rx="1.3" ry="1.3" fill="#d03434"/><ellipse cx="3" cy="4" rx="2.4" ry="2.4" fill="#8e96a4"/></g></g></svg><svg style="left:776px;top:363.06px" width="18" height="8" viewBox="776 0 18 8"><rect x="779.1" y="0.6" width="1.8" height="3.5" rx="0.9" fill="#c6c6cc"/><path d="M778.2 3.4a1.8 1.8 0 0 0 3.6 0M780 5.2v1.3M779 6.7h2" stroke="#c6c6cc" stroke-width="0.5" fill="none"/><path d="M777.4 7.2L782.6 0.6" stroke="#f28a8a" stroke-width="0.6"/><rect x="787" y="2.3" width="3.8" height="3.4" rx="0.5" fill="#c8c8ce"/><path d="M791 3.6L792.7 2.5V5.5L791 4.4z" fill="#c8c8ce"/><path d="M786.6 6.4L791.4 1.6" stroke="#f4a0a0" stroke-width="0.6"/></svg><svg style="left:650.8px;top:379.09px;overflow:hidden" width="12.4" height="12.40" viewBox="0 0 12.4 12.40"><g clip-path="url(#ca)"><rect width="12.4" height="12.4" fill="#d5d6f5"/><g filter="url(#ba)"><ellipse cx="6.2" cy="6.4" rx="3.8" ry="3.4" fill="#ecebfb"/><ellipse cx="4.6" cy="6.4" rx="0.9" ry="0.7" fill="#c05060"/><ellipse cx="7.8" cy="6.4" rx="0.9" ry="0.7" fill="#c05060"/></g></g></svg><svg style="left:776px;top:381.39px" width="18" height="8" viewBox="776 0 18 8"><rect x="779.1" y="0.6" width="1.8" height="3.5" rx="0.9" fill="#c6c6cc"/><path d="M778.2 3.4a1.8 1.8 0 0 0 3.6 0M780 5.2v1.3M779 6.7h2" stroke="#c6c6cc" stroke-width="0.5" fill="none"/><path d="M777.4 7.2L782.6 0.6" stroke="#f28a8a" stroke-width="0.6"/><rect x="787" y="2.3" width="3.8" height="3.4" rx="0.5" fill="#c8c8ce"/><path d="M791 3.6L792.7 2.5V5.5L791 4.4z" fill="#c8c8ce"/><path d="M786.6 6.4L791.4 1.6" stroke="#f4a0a0" stroke-width="0.6"/></svg><svg style="left:650.8px;top:397.43px;overflow:hidden" width="12.4" height="10.97" viewBox="0 0 12.4 10.97"><g clip-path="url(#ca)"><rect width="12.4" height="12.4" fill="#221c14"/><g filter="url(#ba)"><ellipse cx="6" cy="6.4" rx="3" ry="3.6" fill="#4a4030"/><ellipse cx="8" cy="4" rx="2" ry="2" fill="#5a4c38"/><ellipse cx="4" cy="9" rx="3" ry="3" fill="#35291c"/></g></g></svg><svg style="left:776px;top:399.73px" width="18" height="8" viewBox="776 0 18 8"><rect x="779.1" y="0.6" width="1.8" height="3.5" rx="0.9" fill="#c6c6cc"/><path d="M778.2 3.4a1.8 1.8 0 0 0 3.6 0M780 5.2v1.3M779 6.7h2" stroke="#c6c6cc" stroke-width="0.5" fill="none"/><path d="M777.4 7.2L782.6 0.6" stroke="#f28a8a" stroke-width="0.6"/><rect x="787" y="2.3" width="3.8" height="3.4" rx="0.5" fill="#c8c8ce"/><path d="M791 3.6L792.7 2.5V5.5L791 4.4z" fill="#c8c8ce"/><path d="M786.6 6.4L791.4 1.6" stroke="#f4a0a0" stroke-width="0.6"/></svg><div class="a" style="left:644.7px;top:408.3px;width:155.30px;height:24.50px;background:#fff;border-top:0.6px solid #e2e2e8;box-sizing:border-box;"></div><div class="a" style="left:705.3px;top:416.6px;width:39.50px;height:9.20px;background:#fff;border:0.7px solid #bfc2cc;border-radius:1.5px;box-sizing:border-box;"></div><svg style="left:9.6px;top:415px" width="8" height="10" viewBox="0 0 8 10"><rect x="2.6" y="0.3" width="2.8" height="5.4" rx="1.4" fill="#3c3d42"/><path d="M1.2 4.6a2.8 2.8 0 0 0 5.6 0M4 7.4v1.6M2.4 9.2h3.2" stroke="#3c3d42" stroke-width="0.7" fill="none"/><path d="M0.8 8.4L7 1.4" stroke="#f0503c" stroke-width="0.8"/></svg><svg style="left:25.9px;top:422.1px" width="3.8" height="2.6" viewBox="0 0 3.6 2.4"><path d="M0.3 2.1L1.8 0.5L3.3 2.1" stroke="#444" stroke-width="0.65" fill="none"/></svg><svg style="left:41.2px;top:415.4px" width="11" height="8.4" viewBox="0 0 11 8.4"><rect x="0.4" y="1.4" width="7" height="5.6" rx="0.9" fill="#3c3d42"/><path d="M7.6 3.6L10.4 1.8V6.6L7.6 4.8z" fill="#3c3d42"/><path d="M0.8 7.8L7.6 0.6" stroke="#f0503c" stroke-width="0.8"/></svg><svg style="left:61.9px;top:422.1px" width="3.8" height="2.6" viewBox="0 0 3.6 2.4"><path d="M0.3 2.1L1.8 0.5L3.3 2.1" stroke="#444" stroke-width="0.65" fill="none"/></svg><svg style="left:227.8px;top:415.2px" width="10" height="9.4" viewBox="0 0 10 9.4"><rect x="0.3" y="0.3" width="9.4" height="6.8" rx="0.8" fill="#2c3a34" stroke="#2fc26a" stroke-width="0.8"/><path d="M3.6 4.8C3.8 3.6 4.6 3 5.6 3V2.2L7 3.5L5.6 4.8V4C4.8 4 4.2 4.2 3.6 4.8z" fill="#e8ffe8"/><rect x="3" y="8.2" width="4" height="0.8" fill="#3c3d42"/></svg><svg style="left:250.2px;top:422.1px" width="3.8" height="2.6" viewBox="0 0 3.6 2.4"><path d="M0.3 2.1L1.8 0.5L3.3 2.1" stroke="#444" stroke-width="0.65" fill="none"/></svg><svg style="left:262.6px;top:415.4px" width="10.4" height="8.6" viewBox="0 0 10.4 8.6"><circle cx="4.6" cy="2" r="1.8" fill="#3c3d42"/><path d="M0.6 8.2C0.7 5.6 2.4 4.6 4.6 4.6C5.4 4.6 6 4.7 6.6 5V8.2z" fill="#3c3d42"/><rect x="5.6" y="4.4" width="4.4" height="3.6" rx="1.6" fill="#fff" stroke="#3c3d42" stroke-width="0.8"/><path d="M7.8 5.2v2M6.8 6.2h2" stroke="#3c3d42" stroke-width="0.5"/></svg><div class="a" style="left:280.8px;top:414.3px;width:40.20px;height:17.40px;background:#e6e6ec;border-radius:1.5px;"></div><svg style="left:296.6px;top:415.6px" width="10" height="8.4" viewBox="0 0 10 8.4"><circle cx="5" cy="2" r="1.9" fill="#3c3d42"/><path d="M0.6 8C0.8 5.4 2.6 4.6 5 4.6C7.4 4.6 9.2 5.4 9.4 8z" fill="#3c3d42"/></svg><svg style="left:330.2px;top:416px" width="9" height="8" viewBox="0 0 9 8"><path d="M0.9 0.3h7.2a0.7 0.7 0 0 1 0.7 0.7v4.4a0.7 0.7 0 0 1-0.7 0.7H6.6V7.8L4.6 6.1H0.9a0.7 0.7 0 0 1-0.7-0.7V1a0.7 0.7 0 0 1 0.7-0.7z" fill="#3c3d42"/><circle cx="2.6" cy="3.1" r="0.55" fill="#fff"/><circle cx="4.5" cy="3.1" r="0.55" fill="#fff"/><circle cx="6.4" cy="3.1" r="0.55" fill="#fff"/></svg><svg style="left:358.2px;top:414.8px" width="7.6" height="9.6" viewBox="0 0 7.6 9.6"><path d="M1.6 5V1.6a0.6 0.6 0 0 1 1.2 0V4h0.2V0.8a0.6 0.6 0 0 1 1.2 0V4h0.2V1.2a0.6 0.6 0 0 1 1.2 0V4.4h0.2V2.4a0.6 0.6 0 0 1 1.2 0V6.4C7 8.2 5.8 9.4 4.2 9.4C2.8 9.4 2 8.6 1.4 7.6L0.3 5.4C0.2 4.8 0.9 4.4 1.3 4.9z" fill="#3c3d42"/></svg><svg style="left:386px;top:414.8px" width="9.2" height="9.4" viewBox="0 0 9.2 9.4"><rect x="0.3" y="0.6" width="3.6" height="3.6" rx="0.6" fill="#3c3d42"/><rect x="0.3" y="5.2" width="3.6" height="3.6" rx="0.6" fill="#3c3d42"/><rect x="5" y="5.2" width="3.6" height="3.6" rx="0.6" fill="#3c3d42"/><circle cx="6.9" cy="2.3" r="1.7" fill="#fff" stroke="#3c3d42" stroke-width="0.8"/></svg><svg style="left:411px;top:415px" width="9" height="9" viewBox="0 0 9 9"><polygon points="8.88,4.07 8.88,4.93 7.66,5.46 7.41,6.06 7.90,7.29 7.29,7.90 6.06,7.41 5.46,7.66 4.93,8.88 4.07,8.88 3.54,7.66 2.94,7.41 1.71,7.90 1.10,7.29 1.59,6.06 1.34,5.46 0.12,4.93 0.12,4.07 1.34,3.54 1.59,2.94 1.10,1.71 1.71,1.10 2.94,1.59 3.54,1.34 4.07,0.12 4.93,0.12 5.46,1.34 6.06,1.59 7.29,1.10 7.90,1.71 7.41,2.94 7.66,3.54" fill="#3c3d42"/><circle cx="4.5" cy="4.5" r="1.7" fill="#fff"/></svg><svg style="left:6.2px;top:438.0px" width="7.2" height="7.2" viewBox="0 0 7.2 7.2"><path d="M0 1L3.2 0.55V3.4H0zM3.6 0.5L7.2 0V3.4H3.6zM0 3.8H3.2V6.65L0 6.2zM3.6 3.8H7.2V7.2L3.6 6.7z" fill="#f4f4f4"/></svg><svg style="left:26.4px;top:437.9px" width="7.6" height="7.6" viewBox="0 0 7.6 7.6"><circle cx="4.6" cy="3" r="2.4" stroke="#f0f0f0" stroke-width="0.65" fill="none"/><path d="M2.9 4.8L0.6 7.2" stroke="#f0f0f0" stroke-width="0.75"/></svg><svg style="left:45.8px;top:438.3px" width="8" height="6.6" viewBox="0 0 8 6.6"><rect x="0.4" y="1.4" width="4.4" height="3.8" stroke="#f0f0f0" stroke-width="0.7" fill="none"/><path d="M0.4 0.3h4.6M0.4 6.3h4.6M6.4 0.4v5.8M7.5 1.6v3.6" stroke="#f0f0f0" stroke-width="0.7"/></svg><svg style="left:66.6px;top:437.0px" width="9" height="8" viewBox="0 0 9.4 8"><path d="M0.2 0.8h3.2l0.8 0.9h5v5.8h-9z" fill="#f2b630"/><rect x="0.2" y="2.4" width="9" height="5.2" fill="#fbd25a"/><rect x="2.2" y="4.6" width="5" height="3" fill="#3a9be8"/><rect x="3.2" y="5.6" width="3" height="2" fill="#fbd25a"/></svg><svg style="left:87px;top:437.0px" width="9" height="9" viewBox="-4.5 -4.5 9 9"><circle r="4.5" fill="#fff"/><path d="M0 0L-3.9 -2.25A4.5 4.5 0 0 1 3.9 -2.25z" fill="#ea4335"/><path d="M0 0L3.9 -2.25A4.5 4.5 0 0 1 0 4.5z" fill="#fbbc05"/><path d="M0 0L0 4.5A4.5 4.5 0 0 1 -3.9 -2.25z" fill="#34a853"/><circle r="2.05" fill="#fff"/><circle r="1.6" fill="#4285f4"/></svg><svg style="left:107px;top:437.1px" width="11" height="9" viewBox="0 0 11 9"><ellipse cx="5" cy="3.6" rx="4.4" ry="3.2" fill="#f2eded" stroke="#c43c3c" stroke-width="0.9"/><path d="M2.6 3.8L5 2.4l2.2 1.8" stroke="#a8a0a0" stroke-width="0.7" fill="none"/><circle cx="8.4" cy="6.8" r="1.5" fill="#2f7bd8"/><path d="M5.6 6.6l2-0.4" stroke="#2f7bd8" stroke-width="0.8"/></svg><svg style="left:127.6px;top:437.5px" width="9.6" height="8.4" viewBox="0 0 9.6 8.4"><rect x="2.6" y="0.2" width="6.8" height="8" rx="0.6" fill="#2aa6a0"/><rect x="2.6" y="4.2" width="6.8" height="4" fill="#168a86"/><rect x="0.2" y="1.8" width="5" height="5" rx="0.5" fill="#0f6e6c"/><path d="M1.9 5.6V3h1c1.1 0 1.1 1.5 0 1.5h-1" stroke="#fff" stroke-width="0.6" fill="none"/></svg><svg style="left:147.6px;top:437.5px" width="9.6" height="8.4" viewBox="0 0 9.6 8.4"><rect x="2.6" y="0.2" width="6.8" height="8" rx="0.6" fill="#3f8ae0"/><rect x="2.6" y="2.8" width="6.8" height="2.7" fill="#2b6fd0"/><rect x="2.6" y="5.5" width="6.8" height="2.7" fill="#1e56b8"/><rect x="0.2" y="1.8" width="5" height="5" rx="0.5" fill="#1a4fa8"/><path d="M1.2 3.1l0.7 2.5l0.8-2.2l0.8 2.2l0.7-2.5" stroke="#fff" stroke-width="0.55" fill="none"/></svg><svg style="left:168px;top:437.5px" width="10.4" height="8.6" viewBox="0 0 10.4 8.6"><ellipse cx="4" cy="3.2" rx="3.8" ry="3" fill="#3fc250"/><path d="M1.6 5.4L1 7l1.8-1z" fill="#3fc250"/><ellipse cx="6.9" cy="5.4" rx="3.2" ry="2.6" fill="#e6e6e6"/><path d="M8.6 7.4l0.6 1.1l-1.6-0.7z" fill="#e6e6e6"/><circle cx="2.8" cy="2.6" r="0.45" fill="#1e1c1c"/><circle cx="5.2" cy="2.6" r="0.45" fill="#1e1c1c"/></svg><svg style="left:189px;top:436.8px" width="9" height="9" viewBox="-4.5 -4.5 9 9"><circle r="4.5" fill="#fff"/><path d="M0 0L-3.9 -2.25A4.5 4.5 0 0 1 3.9 -2.25z" fill="#ea4335"/><path d="M0 0L3.9 -2.25A4.5 4.5 0 0 1 0 4.5z" fill="#fbbc05"/><path d="M0 0L0 4.5A4.5 4.5 0 0 1 -3.9 -2.25z" fill="#34a853"/><circle r="2.05" fill="#fff"/><circle r="1.6" fill="#4285f4"/></svg><svg style="left:194.4px;top:441.7px" width="4.4" height="4.4" viewBox="0 0 4.4 4.4"><circle cx="2.2" cy="2.2" r="2.2" fill="#b068e8"/><circle cx="2.2" cy="1.7" r="0.8" fill="#fff"/><path d="M0.9 3.6a1.4 1.4 0 0 1 2.6 0z" fill="#fff"/></svg><svg style="left:204px;top:432px" width="20" height="18"><rect x="0.00" y="0.80" width="20.00" height="17.20" fill="#3a3a3c"/></svg><svg style="left:209px;top:437.1px" width="10" height="8.4" viewBox="0 0 10 8.4"><rect x="0" y="0.4" width="9.4" height="8" rx="1.2" fill="#1677f0"/><path d="M1.6 6L3.4 3.2L4.7 5L6 3.2L7.8 6L6 5.2L4.7 6.2L3.4 5.2z" fill="#fff"/><rect x="7.2" y="0" width="2.6" height="2.2" rx="0.4" fill="#cfe2ff"/></svg><svg style="left:125px;top:449px" width="15" height="1"><rect x="0.40" y="0.20" width="14.60" height="0.80" fill="#8cb4e8"/></svg><svg style="left:165px;top:449px" width="16" height="1"><rect x="0.60" y="0.20" width="15.40" height="0.80" fill="#8cb4e8"/></svg><svg style="left:186px;top:449px" width="16" height="1"><rect x="0.00" y="0.20" width="15.60" height="0.80" fill="#8cb4e8"/></svg><svg style="left:204px;top:449px" width="20" height="1"><rect x="0.00" y="0.20" width="20.00" height="0.80" fill="#8cb4e8"/></svg><svg style="left:700px;top:433px" width="100" height="17" viewBox="700 433 100 17">
<path d="M697.6 443.2L700 440.6L702.4 443.2" stroke="#eee" stroke-width="0.6" fill="none" transform="translate(0,0)"/>
<rect x="708.4" y="438.6" width="3.8" height="5" stroke="#eee" stroke-width="0.6" fill="none"/><path d="M709.2 437.8h2.2M709.6 441h1.6" stroke="#eee" stroke-width="0.6"/>
<rect x="717" y="438.4" width="6.4" height="4.6" stroke="#eee" stroke-width="0.6" fill="none"/><rect x="717.8" y="442" width="2.2" height="2.4" fill="#eee"/><path d="M720 444.2h3" stroke="#eee" stroke-width="0.5"/>
<path d="M727.2 440.4h1.2l1.6-1.4v5l-1.6-1.4h-1.2z" fill="none" stroke="#eee" stroke-width="0.55"/><path d="M731 439.6a2.4 2.4 0 0 1 0 3.8M732 438.6a3.8 3.8 0 0 1 0 5.8" stroke="#eee" stroke-width="0.45" fill="none"/>
<rect x="782.6" y="437" width="5.6" height="4.6" fill="#eee"/><path d="M783.4 438.4h4M783.4 439.8h3" stroke="#1e1c1c" stroke-width="0.45"/><path d="M784 441.6v1.6l1.6-1.6z" fill="#eee"/>
<circle cx="788.8" cy="443.6" r="2.5" fill="#1e1c1c" stroke="#eee" stroke-width="0.5"/>
</svg>
<div id="txt"><div class="t" style="left:359px;top:2px;font-size:5.83px;line-height:7.0px;color:#fff;font-weight:400;font-family:'Liberation Sans','Noto Sans CJK SC',sans-serif;transform:translate(0.20px,0.11px) scale(0.9091,1.0000) rotate(0.03deg);">You are watching RUDN&#x27;s screen</div><div class="t" style="left:542px;top:16px;font-size:5.67px;line-height:6.8px;color:#333;font-weight:400;font-family:'Liberation Sans','Noto Sans CJK SC',sans-serif;transform:translate(0.60px,0.15px) scale(0.9091,1.0000) rotate(0.03deg);">12:48</div><div class="t" style="left:574px;top:15px;font-size:5.74px;line-height:6.88px;color:#222;font-weight:400;font-family:'Liberation Sans','Noto Sans CJK SC',sans-serif;transform:translate(0.00px,0.82px) scale(0.9091,1.0000) rotate(0.03deg);">Speaker view</div><div class="t" style="left:19px;top:31px;font-size:5.82px;line-height:6.98px;color:#e8e8e8;font-weight:400;font-family:'Liberation Sans','Noto Sans CJK SC',sans-serif;transform:translate(0.50px,0.50px) scale(0.9091,1.0000) rotate(0.03deg);">Recording</div><div class="t" style="left:120px;top:100px;font-size:15.40px;line-height:18.48px;color:#5a2d8e;font-weight:700;font-family:'Liberation Sans','Noto Sans CJK SC',sans-serif;transform:translate(0.60px,0.05px) scale(0.9731,1.0000) rotate(0.03deg);-webkit-text-stroke:0.25px #5a2d8e;">Перечень документов портфолио</div><div class="t" style="left:191px;top:151px;font-size:9.90px;line-height:11.88px;color:#fff;font-weight:700;font-family:'Liberation Sans','Noto Sans CJK SC',sans-serif;transform:translate(0.00px,0.27px) scale(0.9287,1.0000) rotate(0.03deg);">МОТИВАЦИОННОЕ ПИСЬМО</div><div class="t" style="left:121px;top:171px;font-size:10.00px;line-height:12.0px;color:#fff;font-weight:700;font-family:'Liberation Sans','Noto Sans CJK SC',sans-serif;transform:translate(0.50px,0.08px) scale(0.9325,1.0000) rotate(0.03deg);">ПРОЕКТНО-ПРАКТИЧЕСКАЯ И НАУЧНАЯ ДЕЯТЕЛЬНОСТЬ</div><div class="t" style="left:30px;top:188px;font-size:9.00px;line-height:10.8px;color:#4a2a80;font-weight:700;font-family:'Liberation Sans','Noto Sans CJK SC',sans-serif;transform:translate(0.00px,0.61px) scale(0.9633,1.0000) rotate(0.03deg);">Наличие опыта профессиональной деятельности (копия трудовой книжки)</div><div class="t" style="left:30px;top:209px;font-size:9.00px;line-height:10.8px;color:#4a2a80;font-weight:700;font-family:'Liberation Sans','Noto Sans CJK SC',sans-serif;transform:translate(0.00px,0.05px) scale(0.9526,1.0000) rotate(0.03deg);">Стажировка / профессиональная переподготовка по профилю программы</div><div class="t" style="left:30px;top:229px;font-size:9.00px;line-height:10.8px;color:#4a2a80;font-weight:700;font-family:'Liberation Sans','Noto Sans CJK SC',sans-serif;transform:translate(0.00px,0.62px) scale(0.9455,1.0000) rotate(0.03deg);">Публикационная активность</div><div class="t" style="left:30px;top:249px;font-size:9.00px;line-height:10.8px;color:#4a2a80;font-weight:700;font-family:'Liberation Sans','Noto Sans CJK SC',sans-serif;transform:translate(0.00px,0.85px) scale(0.9753,1.0000) rotate(0.03deg);">Сертификат / диплом участника научной конференции, симпозиума и т.д.</div><div class="t" style="left:30px;top:270px;font-size:9.00px;line-height:10.8px;color:#4a2a80;font-weight:700;font-family:'Liberation Sans','Noto Sans CJK SC',sans-serif;transform:translate(0.00px,0.32px) scale(0.9612,1.0000) rotate(0.03deg);">Участие в научно-исследовательском / образовательном / социальном проекте</div><div class="t" style="left:30px;top:290px;font-size:9.00px;line-height:10.8px;color:#4a2a80;font-weight:700;font-family:'Liberation Sans','Noto Sans CJK SC',sans-serif;transform:translate(0.00px,0.78px) scale(0.9712,1.0000) rotate(0.03deg);">Сертификат участника зимней/летней школы</div><div class="t" style="left:30px;top:311px;font-size:9.00px;line-height:10.8px;color:#4a2a80;font-weight:700;font-family:'Liberation Sans','Noto Sans CJK SC',sans-serif;transform:translate(0.00px,0.15px) scale(0.9535,1.0000) rotate(0.03deg);">Рекомендательные письма</div><div class="t" style="left:483px;top:354px;font-size:5.93px;line-height:7.12px;color:#8a8a8a;font-weight:400;font-family:'Liberation Sans','Noto Sans CJK SC',sans-serif;transform:translate(0.00px,0.91px) scale(0.9091,1.0000) rotate(0.03deg);">20</div><div class="t" style="left:452px;top:90px;font-size:5.40px;line-height:6.48px;color:#2a5db0;font-weight:700;font-family:'Liberation Serif',serif;transform:translate(0.50px,0.56px) scale(0.8141,1.0000) rotate(0.03deg);">RUDN</div><div class="t" style="left:452px;top:94px;font-size:6.38px;line-height:7.66px;color:#3a6fc4;font-weight:400;font-family:'Liberation Serif',serif;transform:translate(0.50px,0.17px) scale(0.9091,1.0000) rotate(0.03deg);">University</div><div class="t" style="left:455px;top:108px;font-size:7.77px;line-height:9.33px;color:#fff;font-weight:400;font-family:'Liberation Serif',serif;transform:translate(0.20px,0.02px) scale(0.9091,1.0000) rotate(0.03deg);">РЯ</div><div class="t" style="left:469px;top:106px;font-size:5.78px;line-height:6.93px;color:#2f9a4a;font-weight:700;font-family:'Liberation Sans','Noto Sans CJK SC',sans-serif;transform:translate(0.80px,0.91px) scale(0.9091,1.0000) rotate(0.03deg);">ИНСТИТУТ</div><div class="t" style="left:469px;top:113px;font-size:5.75px;line-height:6.9px;color:#2f9a4a;font-weight:700;font-family:'Liberation Sans','Noto Sans CJK SC',sans-serif;transform:translate(0.80px,0.67px) scale(0.9091,1.0000) rotate(0.03deg);">РУССКОГО ЯЗЫКА</div><div class="t" style="left:23px;top:372px;font-size:5.67px;line-height:6.81px;color:#e8e8e8;font-weight:400;font-family:'Liberation Sans','Noto Sans CJK SC',sans-serif;transform:translate(0.60px,0.17px) scale(0.9091,1.0000) rotate(0.03deg);">Say something...</div><div class="t" style="left:585px;top:59px;font-size:3.39px;line-height:4.07px;color:#fff;font-weight:700;font-family:'Liberation Sans','Noto Sans CJK SC',sans-serif;transform:translate(0.60px,0.27px) scale(0.9091,1.0000) rotate(0.03deg);">я</div><div class="t" style="left:535px;top:87px;font-size:5.52px;line-height:6.63px;color:#fff;font-weight:400;font-family:'Liberation Sans','Noto Sans CJK SC',sans-serif;transform:translate(0.20px,0.11px) scale(0.9091,1.0000) rotate(0.03deg);">Людмила Павлова</div><div class="t" style="left:544px;top:149px;font-size:5.39px;line-height:6.47px;color:#fff;font-weight:400;font-family:'Liberation Sans','Noto Sans CJK SC',sans-serif;transform:translate(0.00px,0.63px) scale(0.9091,1.0000) rotate(0.03deg);">Сунь Хунфэй</div><div class="t" style="left:544px;top:213px;font-size:5.13px;line-height:6.16px;color:#fff;font-weight:400;font-family:'Liberation Sans','Noto Sans CJK SC',sans-serif;transform:translate(0.60px,0.46px) scale(0.9091,1.0000) rotate(0.03deg);">杨忠华</div><div class="t" style="left:552px;top:339px;font-size:5.61px;line-height:6.73px;color:#fff;font-weight:400;font-family:'Liberation Sans','Noto Sans CJK SC',sans-serif;transform:translate(0.90px,0.69px) scale(0.9091,1.0000) rotate(0.03deg);">MilaPavlova</div><div class="t" style="left:544px;top:277px;font-size:4.87px;line-height:5.85px;color:#fff;font-weight:400;font-family:'Liberation Sans','Noto Sans CJK SC',sans-serif;transform:translate(0.70px,0.62px) scale(0.9091,1.0000) rotate(0.03deg);">RUDN</div><div class="t" style="left:544px;top:403px;font-size:5.65px;line-height:6.78px;color:#fff;font-weight:400;font-family:'Liberation Sans','Noto Sans CJK SC',sans-serif;transform:translate(0.60px,0.45px) scale(0.9091,1.0000) rotate(0.03deg);">Lily Alimova</div><div class="t" style="left:543px;top:420px;font-size:5.64px;line-height:6.77px;color:#f2f2f2;font-weight:400;font-family:'Liberation Sans','Noto Sans CJK SC',sans-serif;transform:translate(0.00px,0.10px) scale(0.9091,1.0000) rotate(0.03deg);">Speaking: RUDN:</div><div class="t" style="left:654px;top:15px;font-size:5.81px;line-height:6.97px;color:#111;font-weight:400;font-family:'Liberation Sans','Noto Sans CJK SC',sans-serif;transform:translate(0.00px,0.55px) scale(0.9091,1.0000) rotate(0.03deg);-webkit-text-stroke:0.15px #111;">Attendees (199)</div><div class="t" style="left:659px;top:29px;font-size:5.76px;line-height:6.91px;color:#8c8c94;font-weight:400;font-family:'Liberation Sans','Noto Sans CJK SC',sans-serif;transform:translate(0.00px,0.59px) scale(0.9091,1.0000) rotate(0.03deg);">Search for attendees</div><div class="t" style="left:667px;top:52px;font-size:5.95px;line-height:7.14px;color:#1a1a1c;font-weight:400;font-family:'Liberation Sans','Noto Sans CJK SC',sans-serif;transform:translate(0.80px,0.19px) scale(0.9497,1.0000) rotate(0.03deg);-webkit-text-stroke:0.1px #1a1a1c;">Цзи Чжи</div><div class="t" style="left:667px;top:70px;font-size:5.95px;line-height:7.14px;color:#1a1a1c;font-weight:400;font-family:'Liberation Sans','Noto Sans CJK SC',sans-serif;transform:translate(0.80px,0.77px) scale(0.8976,1.0000) rotate(0.03deg);-webkit-text-stroke:0.1px #1a1a1c;">Цзюй Яо</div><div class="t" style="left:667px;top:89px;font-size:5.95px;line-height:7.14px;color:#1a1a1c;font-weight:400;font-family:'Liberation Sans','Noto Sans CJK SC',sans-serif;transform:translate(0.80px,0.02px) scale(0.8894,1.0000) rotate(0.03deg);-webkit-text-stroke:0.1px #1a1a1c;">Цзян Сы Тун</div><div class="t" style="left:667px;top:107px;font-size:5.95px;line-height:7.14px;color:#1a1a1c;font-weight:400;font-family:'Liberation Sans','Noto Sans CJK SC',sans-serif;transform:translate(0.80px,0.18px) scale(0.8932,1.0000) rotate(0.03deg);-webkit-text-stroke:0.1px #1a1a1c;">Цзян Янь</div><div class="t" style="left:667px;top:125px;font-size:5.95px;line-height:7.14px;color:#1a1a1c;font-weight:400;font-family:'Liberation Sans','Noto Sans CJK SC',sans-serif;transform:translate(0.80px,0.40px) scale(0.9151,1.0000) rotate(0.03deg);-webkit-text-stroke:0.1px #1a1a1c;">Цзяо цзы синь</div><div class="t" style="left:667px;top:144px;font-size:5.95px;line-height:7.14px;color:#1a1a1c;font-weight:400;font-family:'Liberation Sans','Noto Sans CJK SC',sans-serif;transform:translate(0.80px,0.25px) scale(0.9372,1.0000) rotate(0.03deg);-webkit-text-stroke:0.1px #1a1a1c;">Чжай Юй цин</div><div class="t" style="left:667px;top:162px;font-size:5.95px;line-height:7.14px;color:#1a1a1c;font-weight:400;font-family:'Liberation Sans','Noto Sans CJK SC',sans-serif;transform:translate(0.80px,0.35px) scale(0.9266,1.0000) rotate(0.03deg);-webkit-text-stroke:0.1px #1a1a1c;">Чжан Синьюй</div><div class="t" style="left:667px;top:180px;font-size:5.95px;line-height:7.14px;color:#1a1a1c;font-weight:400;font-family:'Liberation Sans','Noto Sans CJK SC',sans-serif;transform:translate(0.80px,0.54px) scale(0.9352,1.0000) rotate(0.03deg);-webkit-text-stroke:0.1px #1a1a1c;">Чжан Цзиньи</div><div class="t" style="left:667px;top:198px;font-size:5.95px;line-height:7.14px;color:#1a1a1c;font-weight:400;font-family:'Liberation Sans','Noto Sans CJK SC',sans-serif;transform:translate(0.80px,0.89px) scale(0.9434,1.0000) rotate(0.03deg);-webkit-text-stroke:0.1px #1a1a1c;">чжан юань жу</div><div class="t" style="left:667px;top:217px;font-size:5.95px;line-height:7.14px;color:#1a1a1c;font-weight:400;font-family:'Liberation Sans','Noto Sans CJK SC',sans-serif;transform:translate(0.80px,0.35px) scale(0.9316,1.0000) rotate(0.03deg);-webkit-text-stroke:0.1px #1a1a1c;">Чжан Юйцзян</div><div class="t" style="left:667px;top:235px;font-size:5.95px;line-height:7.14px;color:#1a1a1c;font-weight:400;font-family:'Liberation Sans','Noto Sans CJK SC',sans-serif;transform:translate(0.80px,0.63px) scale(0.8994,1.0000) rotate(0.03deg);-webkit-text-stroke:0.1px #1a1a1c;">Чжоу Чэнфань</div><div class="t" style="left:667px;top:254px;font-size:5.95px;line-height:7.14px;color:#1a1a1c;font-weight:400;font-family:'Liberation Sans','Noto Sans CJK SC',sans-serif;transform:translate(0.80px,0.15px) scale(0.9197,1.0000) rotate(0.03deg);-webkit-text-stroke:0.1px #1a1a1c;">Чжу МинСян</div><div class="t" style="left:667px;top:272px;font-size:5.95px;line-height:7.14px;color:#1a1a1c;font-weight:400;font-family:'Liberation Sans','Noto Sans CJK SC',sans-serif;transform:translate(0.80px,0.35px) scale(0.8906,1.0000) rotate(0.03deg);-webkit-text-stroke:0.1px #1a1a1c;">Чу Юйфан</div><div class="t" style="left:667px;top:290px;font-size:5.95px;line-height:7.14px;color:#1a1a1c;font-weight:400;font-family:'Liberation Sans','Noto Sans CJK SC',sans-serif;transform:translate(0.80px,0.54px) scale(1.0188,1.0000) rotate(0.03deg);-webkit-text-stroke:0.1px #1a1a1c;">Чэнь Лукун</div><div class="t" style="left:667px;top:308px;font-size:5.95px;line-height:7.14px;color:#1a1a1c;font-weight:400;font-family:'Liberation Sans','Noto Sans CJK SC',sans-serif;transform:translate(0.80px,0.96px) scale(0.9015,1.0000) rotate(0.03deg);-webkit-text-stroke:0.1px #1a1a1c;">Юань Цзя мань</div><div class="t" style="left:667px;top:327px;font-size:5.95px;line-height:7.14px;color:#1a1a1c;font-weight:400;font-family:'Liberation Sans','Noto Sans CJK SC',sans-serif;transform:translate(0.80px,0.88px) scale(0.9032,1.0000) rotate(0.03deg);-webkit-text-stroke:0.1px #1a1a1c;">ЮйТингин余亭亭</div><div class="t" style="left:667px;top:345px;font-size:5.95px;line-height:7.14px;color:#1a1a1c;font-weight:400;font-family:'Liberation Sans','Noto Sans CJK SC',sans-serif;transform:translate(0.80px,0.77px) scale(0.9136,1.0000) rotate(0.03deg);-webkit-text-stroke:0.1px #1a1a1c;">Юлия</div><div class="t" style="left:667px;top:364px;font-size:5.95px;line-height:7.14px;color:#1a1a1c;font-weight:400;font-family:'Liberation Sans','Noto Sans CJK SC',sans-serif;transform:translate(0.80px,0.28px) scale(0.8596,1.0000) rotate(0.03deg);-webkit-text-stroke:0.1px #1a1a1c;">Юра徐晗彬</div><div class="t" style="left:667px;top:382px;font-size:5.95px;line-height:7.14px;color:#1a1a1c;font-weight:400;font-family:'Liberation Sans','Noto Sans CJK SC',sans-serif;transform:translate(0.80px,0.20px) scale(0.9109,1.0000) rotate(0.03deg);-webkit-text-stroke:0.1px #1a1a1c;">Ян вэнь . фу</div><div class="t" style="left:667px;top:400px;font-size:5.95px;line-height:7.14px;color:#1a1a1c;font-weight:400;font-family:'Liberation Sans','Noto Sans CJK SC',sans-serif;transform:translate(0.80px,0.54px) scale(0.8823,1.0000) rotate(0.03deg);-webkit-text-stroke:0.1px #1a1a1c;">Ян Синь дождь</div><div class="t" style="left:715px;top:417px;font-size:5.70px;line-height:6.84px;color:#333;font-weight:400;font-family:'Liberation Sans','Noto Sans CJK SC',sans-serif;transform:translate(0.40px,0.76px) scale(0.9091,1.0000) rotate(0.03deg);">Rename</div><div class="t" style="left:4px;top:425px;font-size:5.53px;line-height:6.63px;color:#333;font-weight:400;font-family:'Liberation Sans','Noto Sans CJK SC',sans-serif;transform:translate(0.90px,0.26px) scale(0.9091,1.0000) rotate(0.03deg);">Unmute</div><div class="t" style="left:34px;top:425px;font-size:5.42px;line-height:6.51px;color:#333;font-weight:400;font-family:'Liberation Sans','Noto Sans CJK SC',sans-serif;transform:translate(0.50px,0.44px) scale(0.9091,1.0000) rotate(0.03deg);">Start Video</div><div class="t" style="left:218px;top:425px;font-size:5.05px;line-height:6.07px;color:#333;font-weight:400;font-family:'Liberation Sans','Noto Sans CJK SC',sans-serif;transform:translate(0.70px,0.26px) scale(0.9091,1.0000) rotate(0.03deg);">Share Screen</div><div class="t" style="left:261px;top:425px;font-size:5.52px;line-height:6.63px;color:#333;font-weight:400;font-family:'Liberation Sans','Noto Sans CJK SC',sans-serif;transform:translate(0.80px,0.38px) scale(0.9091,1.0000) rotate(0.03deg);">Invite</div><div class="t" style="left:283px;top:425px;font-size:5.51px;line-height:6.62px;color:#333;font-weight:400;font-family:'Liberation Sans','Noto Sans CJK SC',sans-serif;transform:translate(0.00px,0.35px) scale(0.9091,1.0000) rotate(0.03deg);">Attendees (99+)</div><div class="t" style="left:329px;top:425px;font-size:5.05px;line-height:6.06px;color:#333;font-weight:400;font-family:'Liberation Sans','Noto Sans CJK SC',sans-serif;transform:translate(0.80px,0.19px) scale(0.9091,1.0000) rotate(0.03deg);">Chat</div><div class="t" style="left:350px;top:425px;font-size:5.05px;line-height:6.06px;color:#333;font-weight:400;font-family:'Liberation Sans','Noto Sans CJK SC',sans-serif;transform:translate(0.00px,0.15px) scale(0.9091,1.0000) rotate(0.03deg);">Raise Hand</div><div class="t" style="left:385px;top:425px;font-size:5.07px;line-height:6.08px;color:#333;font-weight:400;font-family:'Liberation Sans','Noto Sans CJK SC',sans-serif;transform:translate(0.50px,0.03px) scale(0.9091,1.0000) rotate(0.03deg);">Apps</div><div class="t" style="left:407px;top:425px;font-size:5.24px;line-height:6.28px;color:#333;font-weight:400;font-family:'Liberation Sans','Noto Sans CJK SC',sans-serif;transform:translate(0.30px,0.11px) scale(0.9091,1.0000) rotate(0.03deg);">Settings</div><div class="t" style="left:738px;top:438px;font-size:5.27px;line-height:6.33px;color:#f0f0f0;font-weight:400;font-family:'Liberation Sans','Noto Sans CJK SC',sans-serif;transform:translate(0.00px,0.49px) scale(0.9091,1.0000) rotate(0.03deg);">РУС</div><div class="t" style="left:758px;top:434px;font-size:5.19px;line-height:6.22px;color:#f0f0f0;font-weight:400;font-family:'Liberation Sans','Noto Sans CJK SC',sans-serif;transform:translate(0.60px,0.34px) scale(0.9091,1.0000) rotate(0.03deg);">19:25</div><div class="t" style="left:752px;top:443px;font-size:4.97px;line-height:5.96px;color:#f0f0f0;font-weight:400;font-family:'Liberation Sans','Noto Sans CJK SC',sans-serif;transform:translate(0.60px,0.20px) scale(0.9091,1.0000) rotate(0.03deg);">30.03.2023</div><div class="t" style="left:788px;top:442px;font-size:3.56px;line-height:4.27px;color:#f0f0f0;font-weight:400;font-family:'Liberation Sans','Noto Sans CJK SC',sans-serif;transform:translate(0.00px,0.05px) scale(0.9091,1.0000) rotate(0.03deg);">2</div></div>
</body></html>
